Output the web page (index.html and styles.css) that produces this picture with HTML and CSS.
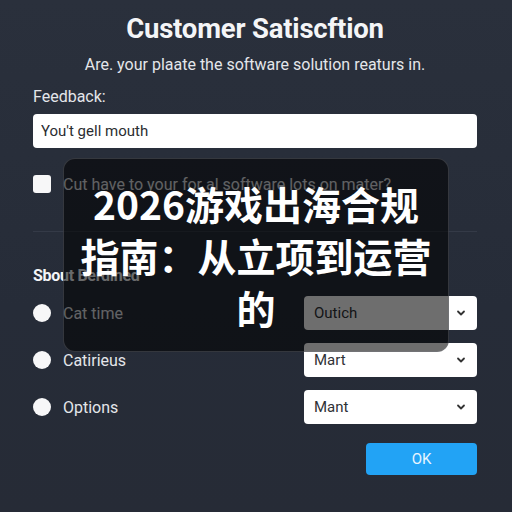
FILE: index.html
```html
<!DOCTYPE html>
<html lang="en">
<head>
    <meta charset="UTF-8">
    <meta name="viewport" content="width=device-width, initial-scale=1.0">
    <title>Customer Satisfaction</title>
    <link rel="stylesheet" href="styles.css">
</head>
<body>

<div class="form">
    <h1>Customer Satiscftion</h1>
    <p class="subtitle">Are. your plaate the software solution reaturs in.</p>

    <label class="field-label" for="feedback">Feedback:</label>
    <input type="text" id="feedback" class="text-input" value="You't gell mouth">

    <div class="check-row">
        <span class="checkbox"></span>
        <span class="check-text">Cut have to your for al software lots on mater?</span>
    </div>

    <div class="divider"></div>

    <h2>Sbout Berdlned</h2>

    <div class="options">
        <div class="option-row">
            <div class="radio-label"><span class="radio"></span>Cat time</div>
            <div class="select"><span>Outich</span>
                <svg width="12" height="12" viewBox="0 0 12 12"><path d="M3 4.5 L6 7.5 L9 4.5" fill="none" stroke="#333" stroke-width="1.8" stroke-linecap="round" stroke-linejoin="round"/></svg>
            </div>
        </div>
        <div class="option-row">
            <div class="radio-label"><span class="radio"></span>Catirieus</div>
            <div class="select"><span>Mart</span>
                <svg width="12" height="12" viewBox="0 0 12 12"><path d="M3 4.5 L6 7.5 L9 4.5" fill="none" stroke="#333" stroke-width="1.8" stroke-linecap="round" stroke-linejoin="round"/></svg>
            </div>
        </div>
        <div class="option-row">
            <div class="radio-label"><span class="radio"></span>Options</div>
            <div class="select"><span>Mant</span>
                <svg width="12" height="12" viewBox="0 0 12 12"><path d="M3 4.5 L6 7.5 L9 4.5" fill="none" stroke="#333" stroke-width="1.8" stroke-linecap="round" stroke-linejoin="round"/></svg>
            </div>
        </div>
    </div>

    <div class="actions">
        <button class="ok-button">OK</button>
    </div>
</div>

<!-- banner over the form -->
<div class="overlay">
    <div class="overlay-text">2026游戏出海合规<br>指南：从立项到运营<br>的</div>
</div>

</body>
</html>
```

FILE: styles.css
```css
body {
    margin: 0;
    width: 512px;
    height: 512px;
    overflow: hidden;
    background: linear-gradient(180deg, #2a303c 0%, #262c38 60%, #262b36 100%);
    font-family: Roboto, "Liberation Sans", sans-serif;
    color: #eceef2;
    position: relative;
}
.form {
    padding: 13px 35px 0 33px;
}
h1 {
    margin: 0;
    text-align: center;
    font-size: 27.5px;
    line-height: 32px;
    font-weight: 700;
    color: #f4f5f7;
    letter-spacing: -0.2px;
}
.subtitle {
    margin: 10px 0 0;
    text-align: center;
    font-size: 16px;
    line-height: 20px;
    color: #e4e6ea;
}
.field-label {
    display: block;
    margin-top: 12px;
    font-size: 16px;
    line-height: 20px;
    color: #e4e6ea;
}
.text-input {
    display: block;
    box-sizing: border-box;
    width: 100%;
    height: 34px;
    margin-top: 7px;
    padding: 0 8px;
    border: none;
    border-radius: 4px;
    background: #ffffff;
    font-family: Roboto, "Liberation Sans", sans-serif;
    font-size: 15px;
    color: #2b2d31;
}
.check-row {
    display: flex;
    align-items: center;
    gap: 12px;
    margin-top: 26px;
    height: 20px;
}
.checkbox {
    width: 18px;
    height: 18px;
    border-radius: 3px;
    background: #f7f7f8;
}
.check-text {
    font-size: 16px;
    color: #e0e2e6;
}
.divider {
    height: 1px;
    margin-top: 37px;
    background: #343a47;
}
h2 {
    margin: 34px 0 0;
    font-size: 16px;
    line-height: 20px;
    font-weight: 700;
    color: #f4f5f7;
    letter-spacing: -0.3px;
}
.options {
    display: flex;
    flex-direction: column;
    gap: 13px;
    margin-top: 10px;
}
.option-row {
    display: flex;
    justify-content: space-between;
    align-items: center;
    height: 34px;
}
.radio-label {
    display: flex;
    align-items: center;
    gap: 12px;
    font-size: 16px;
    color: #e4e6ea;
}
.radio {
    width: 18px;
    height: 18px;
    border-radius: 50%;
    background: #f7f7f8;
}
.select {
    box-sizing: border-box;
    width: 173px;
    height: 34px;
    padding: 0 10px 0 10px;
    border-radius: 4px;
    background: #ffffff;
    display: flex;
    align-items: center;
    justify-content: space-between;
    font-size: 15px;
    color: #2f3136;
}
.actions {
    display: flex;
    justify-content: flex-end;
    margin-top: 19px;
}
.ok-button {
    width: 111px;
    height: 32px;
    border: none;
    border-radius: 4px;
    background: #22a3f5;
    color: #e8f5ff;
    font-family: Roboto, "Liberation Sans", sans-serif;
    font-size: 15px;
    cursor: pointer;
}
.overlay {
    position: absolute;
    left: 63px;
    top: 158px;
    width: 386px;
    height: 194px;
    box-sizing: border-box;
    border: 1px solid rgba(120, 124, 132, 0.35);
    border-radius: 12px;
    background: rgba(0, 0, 0, 0.57);
    display: flex;
    align-items: center;
    justify-content: center;
}
.overlay-text {
    text-align: center;
    font-family: "Noto Sans CJK SC", "Noto Sans", sans-serif;
    font-weight: 700;
    font-size: 39px;
    line-height: 52px;
    color: #ffffff;
}
```
